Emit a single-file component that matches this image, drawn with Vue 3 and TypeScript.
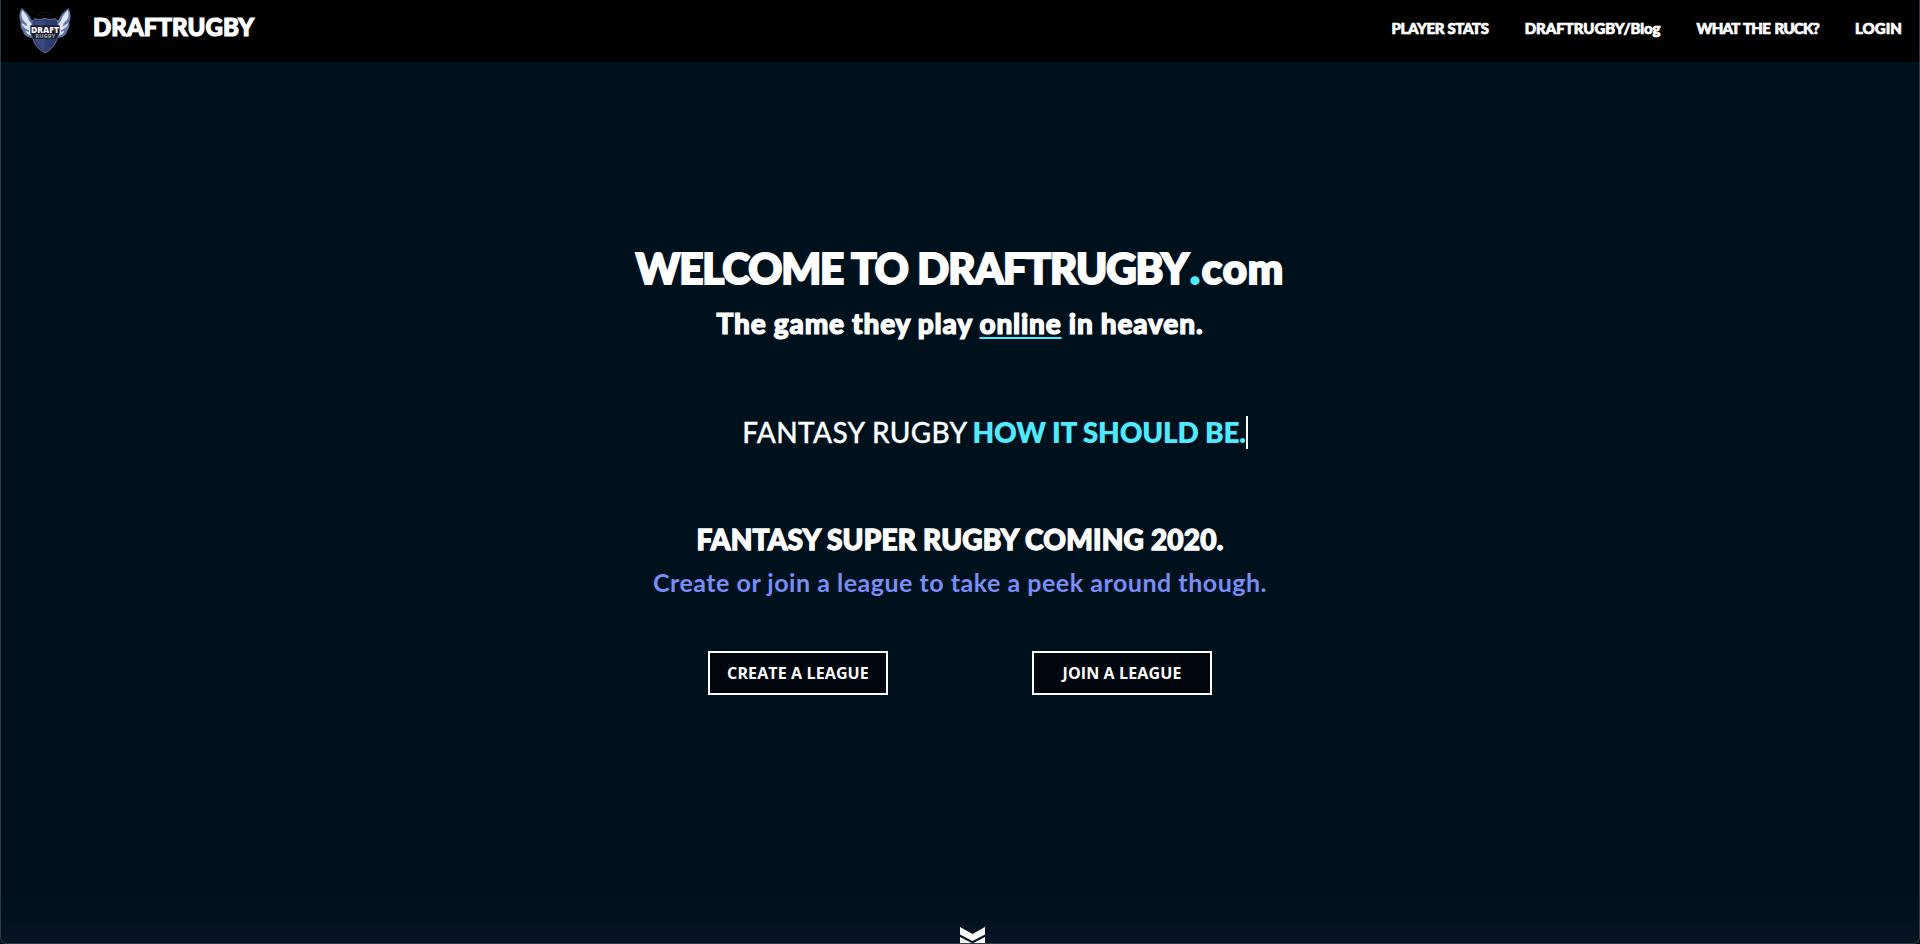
<script setup lang="ts">
interface NavLink {
  label: string
  tone: string
}

const links: NavLink[] = [
  { label: 'PLAYER STATS', tone: 'stats' },
  { label: 'DRAFTRUGBY/Blog', tone: 'blog' },
  { label: 'WHAT THE RUCK?', tone: 'ruck' },
  { label: 'LOGIN', tone: 'login' },
]
</script>

<template>
  <div class="page">
    <header class="bar">
      <a class="home">
        <svg class="logo" viewBox="0 0 174 156" role="img" aria-label="Draft Rugby">
          <ellipse cx="87" cy="31" rx="24" ry="5" fill="none" stroke="#10121f" stroke-width="3" />
          <path d="M17 12C8 28 9 44 14 54C12 66 15 76 21 82C23 94 34 101 48 102L64 86L56 50L46 48C42 34 32 24 17 12Z" fill="#5f76a8" />
          <path d="M157 12C166 28 165 44 160 54C162 66 159 76 153 82C151 94 140 101 126 102L110 86L118 50L128 48C132 34 142 24 157 12Z" fill="#5f76a8" />
          <path d="M19 19C27 28 36 38 40 52L50 62L48 94C38 94 31 88 29 80L39 84L38 78C27 74 18 66 17 56L34 68L31 58C16 47 13 32 19 19Z" fill="#dfe5f2" />
          <path d="M155 19C147 28 138 38 134 52L124 62L126 94C136 94 143 88 145 80L135 84L136 78C147 74 156 66 157 56L140 68L143 58C158 47 161 32 155 19Z" fill="#dfe5f2" />
          <path d="M87 43L101 47L118 44L126 54L125 92C123 118 108 136 87 147C66 136 51 118 49 92L48 54L56 44L73 47Z" fill="#2c3c70" stroke="#6d7590" stroke-width="3" />
          <path d="M87 50V140C70 130 57 114 55 93V56L62 51L76 53Z" fill="#394a83" />
          <path d="M43 64H131V88L121 105H53L43 88Z" fill="#1b1f33" />
          <text class="crest" x="87" y="87" text-anchor="middle" font-size="28" textLength="84" lengthAdjust="spacingAndGlyphs" fill="#f4f4f6">DRAFT</text>
          <text class="crest" x="88" y="102" text-anchor="middle" font-size="15" textLength="60" lengthAdjust="spacingAndGlyphs" fill="#8f8e94">RUGBY</text>
        </svg>
        <span class="brand">DRAFTRUGBY</span>
      </a>
      <nav class="nav">
        <a v-for="link in links" :key="link.label" class="link" :class="link.tone">{{ link.label }}</a>
      </nav>
    </header>

    <main class="hero">
      <h1 class="title">WELCOME TO DRAFTRUGBY<span class="dot">.</span><span class="tld">com</span></h1>
      <h2 class="tagline">The game they play <span class="online">online</span> in heaven.</h2>
      <p class="typed"><span class="lead">FANTASY RUGBY</span><strong class="claim">HOW IT SHOULD BE.</strong><i class="caret"></i></p>
      <h3 class="coming">FANTASY SUPER RUGBY COMING 2020.</h3>
      <p class="invite">Create or join a league to take a peek around though.</p>
      <div class="actions">
        <button class="action" type="button">CREATE A LEAGUE</button>
        <button class="action" type="button">JOIN A LEAGUE</button>
      </div>
    </main>

    <svg class="scroll" viewBox="0 0 25 17" aria-hidden="true">
      <path d="M0 0L12.5 7L25 0V7.5L12.5 14L0 7.5Z M0 10L12.5 16.5L25 10V17H0Z" fill="#fff" />
    </svg>
  </div>
</template>

<style>
body {
  margin: 0;
  background: #000;
}
</style>

<style scoped>
.page {
  position: relative;
  box-sizing: border-box;
  height: 944px;
  overflow: hidden;
  border: solid #2f3c47;
  border-width: 0 1px 1px;
  border-radius: 0 0 6px 6px;
  background: linear-gradient(#00111e 0, #00111e 895px, #071426 943px);
  color: #fff;
  font-family: Lato, "Open Sans", sans-serif;
}
.bar {
  display: flex;
  justify-content: space-between;
  height: 62px;
  background: #000;
}
.home {
  display: flex;
}
.logo {
  width: 58px;
  height: 52px;
  margin: 4px 0 0 15px;
}
.crest {
  font-family: "Open Sans", sans-serif;
  font-weight: 800;
}
.brand {
  margin: 7px 0 0 19px;
  font-size: 24px;
  font-weight: 900;
  line-height: 40px;
  letter-spacing: 0.05px;
  -webkit-text-stroke: 1.2px #fff;
}
.nav {
  display: flex;
  gap: 36px;
  padding: 13px 17px 0 0;
}
.link {
  font-size: 15px;
  font-weight: 900;
  line-height: 30px;
  white-space: nowrap;
  -webkit-text-stroke: 0.7px #fff;
}
.stats {
  letter-spacing: -0.35px;
}
.blog {
  letter-spacing: -0.05px;
}
.ruck {
  letter-spacing: -0.7px;
  word-spacing: 1.4px;
}
.login {
  letter-spacing: 0.05px;
}
.hero {
  display: flex;
  flex-direction: column;
  align-items: center;
  padding-top: 176px;
}
.hero > * {
  margin: 0;
  white-space: nowrap;
}
.title {
  font-size: 42px;
  font-weight: 900;
  line-height: 60px;
  letter-spacing: -1.05px;
  word-spacing: 0.6px;
  -webkit-text-stroke: 2.1px currentColor;
}
.dot {
  margin: 0 3px 0 2px;
  color: #50e9ff;
}
.tld {
  letter-spacing: 0.9px;
}
.hero > .tagline {
  margin-top: 5px;
  font-size: 28px;
  font-weight: 900;
  line-height: 40px;
  letter-spacing: 0.82px;
  word-spacing: -0.3px;
  -webkit-text-stroke: 1.2px #fff;
}
.online {
  text-decoration: underline #50e9ff 2px;
  text-decoration-skip-ink: none;
  text-underline-offset: 3px;
}
.hero > .typed {
  display: flex;
  align-items: center;
  height: 40px;
  margin: 69px 0 0 70px;
  font-size: 28px;
  line-height: 40px;
}
.lead {
  font-weight: 500;
  letter-spacing: 0.36px;
  -webkit-text-stroke: 0.3px #fff;
}
.claim {
  margin-left: 5px;
  color: #50e9ff;
  font-weight: 800;
  letter-spacing: -0.2px;
}
.caret {
  width: 2px;
  height: 33px;
  background: #fff;
}
.hero > .coming {
  margin-top: 67px;
  font-size: 28px;
  font-weight: 900;
  line-height: 40px;
  letter-spacing: 0.2px;
  -webkit-text-stroke: 1.3px #fff;
}
.hero > .invite {
  margin-top: 3px;
  color: #788df5;
  font-size: 25px;
  font-weight: 700;
  line-height: 40px;
  letter-spacing: 0.52px;
}
.hero > .actions {
  display: flex;
  gap: 144px;
  margin-top: 49px;
}
.action {
  box-sizing: border-box;
  width: 180px;
  height: 44px;
  padding: 0;
  border: 2px solid #fff;
  background: #00060e;
  color: #fff;
  font: 700 16px/40px "Open Sans", sans-serif;
  letter-spacing: 0.12px;
}
.scroll {
  position: absolute;
  bottom: -1px;
  left: 959px;
  width: 25px;
  height: 17px;
}
</style>
